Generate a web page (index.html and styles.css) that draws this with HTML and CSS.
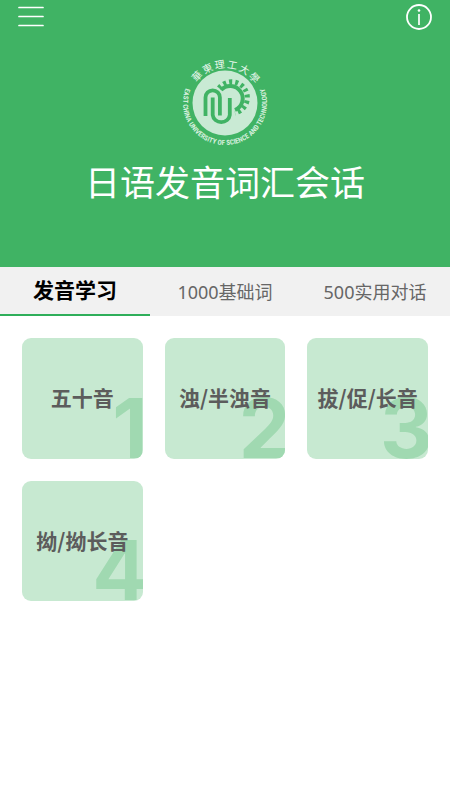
FILE: index.html
```html
<!DOCTYPE html>
<html lang="zh-CN">
<head>
<meta charset="utf-8">
<meta name="viewport" content="width=device-width, initial-scale=1">
<title>日语发音词汇会话</title>
<link rel="stylesheet" href="styles.css">
</head>
<body>
<header class="hero">
  <div class="bar">
    <button class="icon-button" type="button" aria-label="菜单">
      <svg width="26" height="26" viewBox="0 0 26 26"><path d="M1 3.500H25M1 12.500H25M1 21.500H25" stroke="#fff" stroke-width="1.7" stroke-linecap="round"/></svg>
    </button>
    <button class="icon-button" type="button" aria-label="信息">
      <svg width="26" height="26" viewBox="0 0 26 26" fill="none" stroke="#fff"><circle cx="13" cy="13" r="12" stroke-width="1.8"/><path d="M13 10V21" stroke-width="1.7"/><circle cx="13" cy="6.500" r="1.300" fill="#fff" stroke="none"/></svg>
    </button>
  </div>
  <svg class="crest" viewBox="-55 -55 110 110" role="img" aria-label="华东理工大学">
    <defs><path id="ring" d="M-32.500 -26.500A42 42 0 1 0 32.500 -26.500"/></defs>
    <circle r="32.500" fill="#c9ead4"/>
    <g class="crest-name">
      <text y="-35" transform="rotate(-46)">華</text>
      <text y="-35" transform="rotate(-27)">東</text>
      <text y="-35" transform="rotate(-8)">理</text>
      <text y="-35" transform="rotate(11)">工</text>
      <text y="-35" transform="rotate(30)">大</text>
      <text y="-35" transform="rotate(49)">學</text>
    </g>
    <text class="crest-latin"><textPath href="#ring" startOffset="50%">EAST CHINA UNIVERSITY OF SCIENCE AND TECHNOLOGY</textPath></text>
    <g fill="none" stroke="#40b364">
      <path d="M-4 -13A12.500 12.500 0 1 1 10 7" stroke-width="4"/>
      <path d="M-6 -15A15.800 15.800 0 1 1 10 10" stroke-width="5" stroke-dasharray="3 3"/>
      <path d="M-19.500 13V-5.500A7.200 7.200 0 0 1 -5.100 -5.500V12.500" stroke-width="3.800"/>
      <path d="M-12.300 -5.500V12A8.600 8 0 0 0 4.800 12V-5" stroke-width="3.800"/>
    </g>
  </svg>
  <h1 class="title">日语发音词汇会话</h1>
</header>
<nav class="tabs">
  <a class="tab tab-active" href="#pronunciation" aria-current="page">发音学习</a>
  <a class="tab" href="#words">1000基础词</a>
  <a class="tab" href="#dialogues">500实用对话</a>
</nav>
<main class="lessons" id="pronunciation">
  <button class="lesson" type="button"><span class="number">1</span><span class="label">五十音</span></button>
  <button class="lesson" type="button"><span class="number">2</span><span class="label">浊/半浊音</span></button>
  <button class="lesson" type="button"><span class="number">3</span><span class="label">拔/促/长音</span></button>
  <button class="lesson" type="button"><span class="number">4</span><span class="label">拗/拗长音</span></button>
</main>
</body>
</html>
```
FILE: styles.css
```css
* { box-sizing: border-box; }
body {
  margin: 0;
  background: #fff;
  font-family: "Noto Sans CJK SC", sans-serif;
}
button {
  border: 0;
  padding: 0;
  background: none;
  font: inherit;
}
svg { display: block; }
.hero {
  display: flex;
  flex-direction: column;
  align-items: center;
  padding-bottom: 64px;
  background: #40b364;
}
.bar {
  display: flex;
  justify-content: space-between;
  width: 100%;
  padding: 4px 18px 0;
}
.crest {
  width: 110px;
  height: 110px;
  margin-top: 18px;
}
.crest-name text {
  fill: #e8f7ed;
  font-family: "Noto Sans CJK TC", sans-serif;
  font-size: 10px;
  text-anchor: middle;
}
.crest-latin {
  fill: #d5efdd;
  font-family: "Roboto Condensed", Roboto, sans-serif;
  font-size: 7px;
  font-weight: bold;
  text-anchor: middle;
}
.title {
  margin: 0;
  color: #fff;
  font-size: 35px;
  font-weight: 400;
  line-height: 45px;
}
.tabs {
  display: grid;
  grid-template-columns: repeat(3, 1fr);
  background: #f1f1f1;
}
.tab {
  padding-top: 3px;
  border-bottom: 2px solid transparent;
  color: #666;
  font-family: "Noto Sans", "Noto Sans CJK SC", sans-serif;
  font-size: 18px;
  line-height: 44px;
  text-align: center;
  text-decoration: none;
  white-space: nowrap;
}
.tab-active {
  padding-top: 0;
  border-color: #2eae5a;
  color: #000;
  font-size: 21px;
  font-weight: 700;
  line-height: 47px;
}
.lessons {
  display: grid;
  grid-template-columns: repeat(3, 1fr);
  gap: 22px;
  padding: 22px;
}
.lesson {
  position: relative;
  display: flex;
  align-items: center;
  justify-content: center;
  aspect-ratio: 1;
  padding-bottom: 3px;
  overflow: hidden;
  border-radius: 9px;
  background: #c7e9d1;
  color: #5c5c5c;
}
.label {
  position: relative;
  font-size: 21px;
  font-weight: 700;
  line-height: 28px;
  white-space: nowrap;
}
.number {
  position: absolute;
  right: -5px;
  bottom: -20px;
  color: #a0d9b1;
  font-family: Inter, sans-serif;
  font-size: 82px;
  font-weight: 700;
  line-height: 100px;
}
```
